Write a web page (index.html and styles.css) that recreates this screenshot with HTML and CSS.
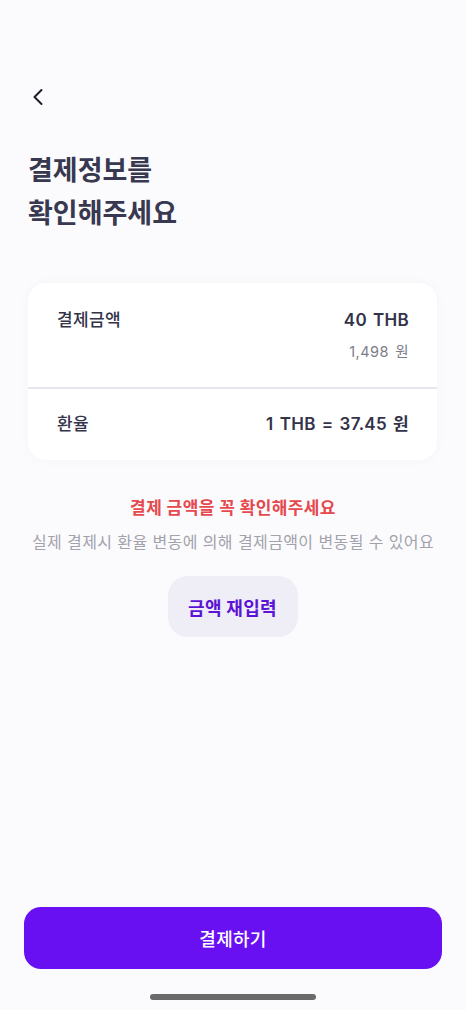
FILE: index.html
```html
<!DOCTYPE html>
<html lang="ko">
<head>
<meta charset="utf-8">
<link rel="stylesheet" href="styles.css">
</head>
<body>
<div class="screen">
  <div class="top">
    <div class="nav">
      <svg class="back" width="14" height="20" viewBox="0 0 14 20"><path d="M10.5 3 L3.5 10 L10.5 17" fill="none" stroke="#1c1c28" stroke-width="2" stroke-linecap="round" stroke-linejoin="round"/></svg>
    </div>
    <h1 class="title">결제정보를<br>확인해주세요</h1>
    <div class="card">
      <div class="row first">
        <div class="label">결제금액</div>
        <div class="values">
          <div class="amount">40 THB</div>
          <div class="sub">1,498 원</div>
        </div>
      </div>
      <div class="divider"></div>
      <div class="row second">
        <div class="label">환율</div>
        <div class="amount">1 THB = 37.45 원</div>
      </div>
    </div>
    <p class="warn">결제 금액을 꼭 확인해주세요</p>
    <p class="note">실제 결제시 환율 변동에 의해 결제금액이 변동될 수 있어요</p>
    <div class="re-wrap"><button class="re">금액 재입력</button></div>
  </div>
  <div class="bottom">
    <button class="pay">결제하기</button>
    <div class="home"></div>
  </div>
</div>
</body>
</html>
```
FILE: styles.css
```css
* { box-sizing: border-box; }
html, body { margin: 0; padding: 0; }
body {
  background: #fbfbfd;
  font-family: Inter, "Noto Sans CJK KR", "Noto Sans", sans-serif;
  color: #33334a;
}
.screen {
  width: 466px;
  height: 1010px;
  display: flex;
  flex-direction: column;
  justify-content: space-between;
}
.nav { padding: 87px 0 0 31px; height: 109px; }
.back { display: block; }
.title {
  margin: 40px 0 0 28px;
  font-size: 27px;
  line-height: 43px;
  font-weight: 700;
  color: #383850;
  letter-spacing: 0;
}
.card {
  margin: 48px 29px 0 28px;
  background: #fff;
  border-radius: 18px;
  box-shadow: 0 0 12px rgba(30, 30, 80, 0.03);
}
.row {
  display: flex;
  justify-content: space-between;
  align-items: flex-start;
  padding: 0 28px 0 29px;
}
.row.first { padding-top: 23px; height: 104px; }
.row.second { padding-top: 21px; height: 71px; }
.label { font-size: 17px; line-height: 28px; color: #33334a; font-weight: 500; letter-spacing: 0.4px; }
.values { text-align: right; }
.amount {
  font-size: 17px;
  line-height: 28px;
  font-weight: 600;
  color: #33334a;
  letter-spacing: 0.3px;
  word-spacing: 1.5px;
}
.sub {
  font-size: 14.5px;
  line-height: 20px;
  color: #7d7d8a;
  margin-top: 8px;
  letter-spacing: 0.5px;
  word-spacing: 1.5px;
}
.divider { height: 2px; background: #e6e6ec; }
.warn {
  margin: 35px 0 0;
  text-align: center;
  font-size: 17px;
  line-height: 26px;
  font-weight: 700;
  color: #e5484d;
  letter-spacing: 0.4px;
}
.note {
  margin: 8px 0 0;
  text-align: center;
  font-size: 16px;
  line-height: 26px;
  color: #a2a2ac;
  letter-spacing: 0.4px;
}
.re-wrap { display: flex; justify-content: center; margin-top: 21px; padding-right: 1px; }
.re {
  width: 130px;
  height: 61px;
  border: none;
  border-radius: 20px;
  background: #efedf5;
  color: #5b14d6;
  font-family: inherit;
  font-size: 18px;
  font-weight: 700;
  letter-spacing: 0.3px;
}
.bottom { padding: 0 24px 10px; }
.pay {
  display: block;
  width: 418px;
  height: 62px;
  border: none;
  border-radius: 17px;
  background: #6810f2;
  color: #fff;
  font-family: inherit;
  font-size: 18px;
  font-weight: 500;
  letter-spacing: 0.3px;
}
.home {
  width: 166px;
  height: 6px;
  border-radius: 3px;
  background: #6a6a6a;
  margin: 25px auto 0;
}
```
